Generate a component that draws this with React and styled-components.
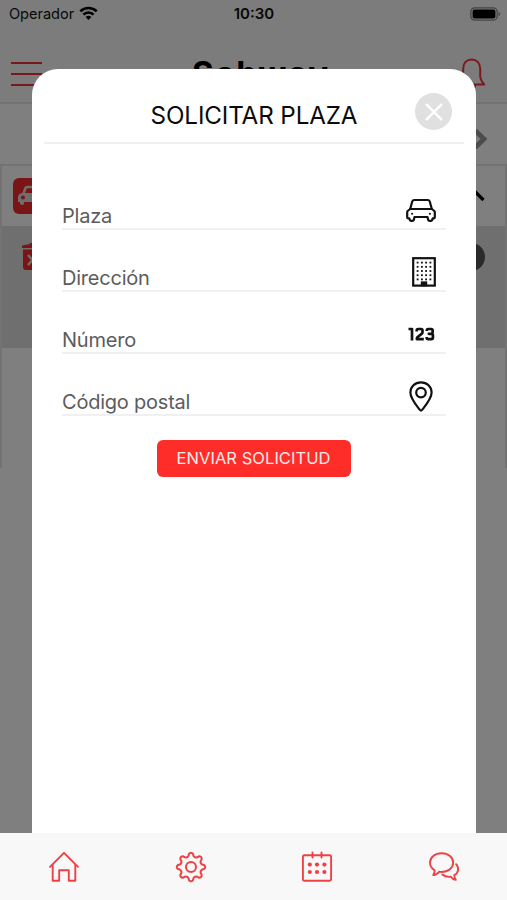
import React, { useState } from "react";
import styled, { createGlobalStyle } from "styled-components";

const GlobalStyle = createGlobalStyle`
  * {
    box-sizing: border-box;
  }
  body {
    margin: 0;
    font-family: Inter, "Liberation Sans", sans-serif;
    background: #fff;
  }
  svg {
    display: block;
    flex: none;
  }
`;

const Phone = styled.div`
  position: relative;
  display: flex;
  flex-direction: column;
  width: 507px;
  height: 900px;
  overflow: hidden;
  background: #fff;
`;

const StatusBar = styled.div`
  display: grid;
  grid-template-columns: 1fr auto 1fr;
  align-items: center;
  height: 27px;
  padding: 0 6px 0 9px;
  background: #f9f9f9;
  color: #111;
`;

const Carrier = styled.div`
  display: flex;
  align-items: center;
  gap: 5px;
  font-size: 14.6px;
  letter-spacing: -0.05px;
`;

const Clock = styled.div`
  margin-right: 2px;
  font-weight: 600;
  font-size: 15px;
`;

const BatterySlot = styled.div`
  justify-self: end;
`;

const Header = styled.header`
  display: flex;
  align-items: flex-start;
  justify-content: space-between;
  height: 77px;
  padding: 21px 21px 0 11px;
  background: #f9f9f9;
  border-bottom: 2px solid #e4e4e4;
`;

const Menu = styled.div`
  display: flex;
  flex-direction: column;
  gap: 9px;
  width: 31px;
  padding-top: 14px;
`;

const MenuLine = styled.span`
  height: 2px;
  background: #f5333a;
`;

const Brand = styled.h1`
  margin: 2px 0 0 22px;
  font-size: 33px;
  line-height: 46px;
  font-weight: 700;
  letter-spacing: 1.7px;
  color: #000;
`;

const Notifications = styled.div`
  padding-top: 10px;
`;

const SubBar = styled.div`
  display: flex;
  align-items: center;
  justify-content: flex-end;
  height: 60px;
  padding: 10px 20px 0 0;
`;

const Panel = styled.section`
  height: 304px;
  border: 2px solid #e6e6e6;
  border-bottom: 0;
`;

const PanelRow = styled.div`
  display: flex;
  align-items: center;
  justify-content: space-between;
  height: 60px;
  padding: 0 20px 0 11px;
`;

const PanelBody = styled.div`
  display: flex;
  align-items: flex-start;
  justify-content: space-between;
  height: 122px;
  padding: 17px 20px 0 19px;
  background: #dfdfdf;
`;

const CarBadge = styled.div`
  display: flex;
  align-items: center;
  justify-content: center;
  width: 36px;
  height: 36px;
  border-radius: 6px;
  background: #f52a2a;
`;

const Dot = styled.div`
  width: 28px;
  height: 28px;
  border-radius: 50%;
  background: #555;
`;

const Backdrop = styled.div`
  position: absolute;
  inset: 0;
  display: flex;
  padding: 69px 31px 67px 32px;
  background: rgba(0, 0, 0, 0.5);
`;

const Modal = styled.div`
  flex: 1;
  padding: 0 12px;
  border-radius: 26px 26px 0 0;
  background: #fff;
`;

const ModalHeader = styled.div`
  display: grid;
  grid-template-columns: 1fr auto 1fr;
  align-items: center;
  height: 75px;
  padding: 12px 12px 0 0;
  border-bottom: 2px solid #f0f0f0;
`;

const ModalTitle = styled.h2`
  grid-column: 2;
  margin: 7px 0 0 12px;
  font-size: 24.2px;
  font-weight: 400;
  letter-spacing: -0.12px;
  color: #0a0a0a;
`;

const CloseButton = styled.button`
  display: flex;
  align-items: center;
  justify-content: center;
  justify-self: end;
  width: 37px;
  height: 37px;
  padding: 0;
  border: 0;
  border-radius: 50%;
  background: #e0e0e0;
`;

const Form = styled.form`
  display: flex;
  flex-direction: column;
  padding: 24px 18px 0;
`;

const Field = styled.label`
  display: flex;
  align-items: flex-end;
  height: 62px;
  border-bottom: 2px solid #f0f0f0;
`;

const Input = styled.input`
  flex: 1;
  min-width: 0;
  height: 24px;
  padding: 0;
  border: 0;
  outline: 0;
  background: none;
  font-family: inherit;
  font-size: 20px;
  letter-spacing: -0.22px;
  color: #555;
  &::placeholder {
    color: #5c5c5c;
    opacity: 1;
  }
`;

const FieldIcon = styled.span`
  display: flex;
  align-items: center;
  justify-content: center;
  width: 32px;
  height: 32px;
  margin: 0 ${(props) => props.$right}px 2px 0;
`;

const Submit = styled.button`
  align-self: center;
  width: 194px;
  height: 37px;
  margin: 24px 1px 0 0;
  padding: 0 0 1px;
  border: 0;
  border-radius: 6px;
  background: #ff2d2a;
  color: #ffe9e7;
  font-family: inherit;
  font-size: 16.5px;
  letter-spacing: 0.05px;
`;

const TabBar = styled.nav`
  position: absolute;
  left: 0;
  right: 0;
  bottom: 0;
  display: grid;
  grid-template-columns: repeat(4, 1fr);
  justify-items: center;
  height: 67px;
  padding: 18px 0 0 1px;
  background: #f8f8f8;
`;

const WifiIcon = () => (
  <svg width="19" height="15" viewBox="0 0 19 15" fill="none" stroke="#000" strokeWidth="2.6">
    <path d="M1.3 5.4a11.6 11.6 0 0 1 16.4 0" />
    <path d="M4.4 8.6a7.2 7.2 0 0 1 10.2 0" />
    <path d="M9.5 14 6.6 11.1a4.1 4.1 0 0 1 5.8 0Z" fill="#000" stroke="none" />
  </svg>
);

const BatteryIcon = () => (
  <svg width="31" height="14" viewBox="0 0 31 14">
    <rect x="0.8" y="0.8" width="26.4" height="12.4" rx="4" fill="none" stroke="#888" strokeWidth="1.3" />
    <rect x="2.6" y="2.6" width="22.8" height="8.8" rx="2" fill="#000" />
    <path d="M28.7 4.8v4.4c2-.8 2-3.6 0-4.4Z" fill="#888" />
  </svg>
);

const BellIcon = () => (
  <svg width="28" height="34" viewBox="0 0 28 34" fill="none" stroke="#f5333a" strokeWidth="2" strokeLinejoin="round">
    <path d="M13.600 1.400C8.600 1.400 5.200 5 5.200 10.400v7c0 4-1.600 6.300-4 9h25c-2.400-2.700-4-5-4-9v-7C22.200 5 18.600 1.400 13.600 1.400Z" />
    <path d="M10.200 26.400c0 5 7 5 7 0" />
  </svg>
);

const CarIcon = () => (
  <svg width="32" height="26" viewBox="0 0 32 26" fill="none" stroke="#111" strokeWidth="2.2" strokeLinejoin="round" strokeLinecap="round">
    <path d="M5.200 12 7.300 4.300Q7.800 3 9.200 3h13.600q1.400 0 1.900 1.300L26.800 12" />
    <path d="M5.600 12h20.800" />
    <path d="M5.200 12 2.600 14Q2.200 14.500 2.200 15.400v4.800q0 1.200 1.200 1.200h.9l.5 1.500q.3 1 1.300 1H7.500q1 0 1.300-1l.7-2.900h13l.7 2.900q.3 1 1.300 1h1.400q1 0 1.300-1l.5-1.500h.9q1.200 0 1.200-1.200v-4.800q0-.9-.4-1.400L26.800 12" />
    <path d="M7 16.700h.2M24.800 16.700h.2" strokeWidth="1.900" />
  </svg>
);

const BuildingIcon = () => (
  <svg width="24" height="30" viewBox="0 0 24 30">
    <rect x="1.200" y="1.200" width="21.600" height="27.400" fill="none" stroke="#111" strokeWidth="2.200" />
    {[5.6, 9.8, 14, 18.2, 22.400].map((y) =>
      [5.6, 9.900, 14.100, 18.400].map((x) => (
        <rect key={`${x}-${y}`} x={x - 0.9} y={y - 0.9} width="1.800" height="1.800" fill="#111" />
      ))
    )}
    <rect x="8.800" y="24.400" width="6.400" height="5" fill="#111" />
  </svg>
);

const NumberIcon = () => (
  <svg width="27" height="14" viewBox="0 0 27 14" fill="none" stroke="#111" strokeWidth="2.700" strokeLinejoin="round">
    <path d="M0.500 2H4v11.500" />
    <path d="M8.700 4.600V3.400Q8.700 2 10.100 2h3Q14.500 2 14.500 3.400v1.800q0 1-.9 1.700L9.600 10q-.8.700-.8 2.100h7" />
    <path d="M18.800 4V3.400Q18.800 2 20.200 2h3q1.400 0 1.400 1.400v1.900q0 1.500-1.400 1.500h-2.400 2.600q1.500 0 1.500 1.500v2.300q0 1.500-1.500 1.500h-3.300q-1.400 0-1.400-1.400V10" />
  </svg>
);

const PinIcon = () => (
  <svg width="24" height="31" viewBox="0 0 24 31" fill="none" stroke="#111" strokeWidth="2.200" strokeLinejoin="round">
    <path d="M12 1.400c-6 0-10.600 4.300-10.600 10.100C1.400 17.600 7 23.800 10.900 28.900q1.100 1.300 2.200 0C17 23.800 22.600 17.600 22.600 11.500 22.600 5.700 18 1.400 12 1.400Z" />
    <circle cx="12" cy="11.600" r="4.800" />
  </svg>
);

const CloseIcon = () => (
  <svg width="18" height="18" viewBox="0 0 18 18" stroke="#fff" strokeWidth="2.400" strokeLinecap="round">
    <path d="M1.700 1.700l14.600 14.600M16.300 1.700 1.700 16.300" />
  </svg>
);

const HomeIcon = () => (
  <svg width="32" height="32" viewBox="0 0 32 32" fill="none" stroke="#ee4145" strokeWidth="1.900" strokeLinejoin="round" strokeLinecap="round">
    <path d="M2 15.800 16 1.800l14 14" />
    <path d="M4.700 14v15.700h6.500V19.200h9.600v10.500h6.500V14" />
  </svg>
);

// el contorno del engranaje se calcula alternando diente y valle
const gearPath = () => {
  const point = (radius, deg) => {
    const a = (deg * Math.PI) / 180;
    return `${(16 + radius * Math.sin(a)).toFixed(2)} ${(16 - radius * Math.cos(a)).toFixed(2)}`;
  };
  let d = `M${point(13.2, -9)}`;
  for (let i = 0; i < 8; i++) {
    const t = i * 45;
    d += `Q${point(15.4, t)} ${point(13.2, t + 9)}`;
    d += `L${point(11.4, t + 13)}Q${point(9.8, t + 22.5)} ${point(11.4, t + 32)}`;
    d += `L${point(13.2, t + 36)}`;
  }
  return d + "Z";
};

const GearIcon = () => (
  <svg width="32" height="32" viewBox="0 0 32 32" fill="none" stroke="#ee4145" strokeWidth="2" strokeLinejoin="round">
    <path d={gearPath()} />
    <circle cx="16" cy="16" r="5" />
  </svg>
);

const CalendarIcon = () => (
  <svg width="32" height="32" viewBox="0 0 32 32" fill="none" stroke="#ee4145" strokeWidth="1.900" strokeLinecap="round">
    <rect x="1.900" y="4.200" width="28.200" height="25.600" rx="1.500" />
    <path d="M11.500 1.500v5M20.500 1.500v5" />
    {[13.600, 21].map((y) =>
      [8.800, 16, 23.400].map((x) => <circle key={`${x}-${y}`} cx={x} cy={y} r="2.1" fill="#ee4145" stroke="none" />)
    )}
  </svg>
);

const ChatIcon = () => (
  <svg width="32" height="32" viewBox="0 0 32 32" fill="none" stroke="#ee4145" strokeWidth="1.900" strokeLinejoin="round" strokeLinecap="round">
    <path d="M13.600 2.200C6.900 2.200 2 6.300 2 11.600c0 3.300 1.700 6 4.700 7.700q.2 2.800-1.500 4.800 4-.5 5.800-3.400 1.200.3 2.600.3c6.700 0 11.600-4.100 11.600-9.400S20.300 2.200 13.600 2.200Z" />
    <path d="M28.100 13.200c3.300 3.500 2.600 8.700-1.800 11q.1 2.700 1.500 4.700-3.300-.5-5-3.100c-3.200.3-6.600-.7-8.500-2.300" />
  </svg>
);

const BadgeCarIcon = () => (
  <svg width="28" height="22" viewBox="0 0 28 22">
    <path d="M6.500 8.500 8.500 3Q9 2 10.200 2h7.600Q19 2 19.500 3l2 5.500" fill="none" stroke="#ddd" strokeWidth="2.500" />
    <path d="M5 8h18q4 1 4 4v5h-2v2q-2 2-4 0v-2H7v2q-2 2-4 0v-2H1v-5q0-3 4-4Z" fill="#ddd" />
    <circle cx="6" cy="12.500" r="2" fill="#f52a2a" />
    <circle cx="22" cy="12.500" r="2" fill="#f52a2a" />
  </svg>
);

const TrashIcon = () => (
  <svg width="26" height="29" viewBox="0 0 26 29">
    <path d="M1 2.500 9 1V0h8v1l8 1.500V5H1Z" fill="#f52a2a" />
    <path d="M2 6.500h22V24q0 3-3 3H5q-3 0-3-3Z" fill="#f52a2a" />
    <path d="m7 12 9 10m0-10L7 22" stroke="#ddd" strokeWidth="2.500" />
  </svg>
);

const ArrowIcon = () => (
  <svg width="16" height="20" viewBox="0 0 16 20" fill="none" stroke="#999" strokeWidth="5">
    <path d="m4 1.500 9 8.500-9 8.500" />
  </svg>
);

const ChevronUpIcon = () => (
  <svg width="22" height="14" viewBox="0 0 22 14" fill="none" stroke="#000" strokeWidth="3.200">
    <path d="m1.500 11 9.500-9.500L20.500 11" />
  </svg>
);

const fields = [
  { name: "plaza", label: "Plaza", icon: <CarIcon />, right: 9 },
  { name: "direccion", label: "Dirección", icon: <BuildingIcon />, right: 6 },
  { name: "numero", label: "Número", icon: <NumberIcon />, right: 9 },
  { name: "codigoPostal", label: "Código postal", icon: <PinIcon />, right: 9 },
];

function App() {
  const [values, setValues] = useState({});
  const onChange = (event) => setValues({ ...values, [event.target.name]: event.target.value });
  const onSubmit = (event) => event.preventDefault();

  return (
    <Phone>
      <GlobalStyle />
      <StatusBar>
        <Carrier>
          Operador <WifiIcon />
        </Carrier>
        <Clock>10:30</Clock>
        <BatterySlot>
          <BatteryIcon />
        </BatterySlot>
      </StatusBar>
      <Header>
        <Menu>
          <MenuLine />
          <MenuLine />
          <MenuLine />
        </Menu>
        <Brand>Sabway</Brand>
        <Notifications>
          <BellIcon />
        </Notifications>
      </Header>
      <SubBar>
        <ArrowIcon />
      </SubBar>
      <Panel>
        <PanelRow>
          <CarBadge>
            <BadgeCarIcon />
          </CarBadge>
          <ChevronUpIcon />
        </PanelRow>
        <PanelBody>
          <TrashIcon />
          <Dot />
        </PanelBody>
      </Panel>

      <Backdrop>
        <Modal>
          <ModalHeader>
            <ModalTitle>SOLICITAR PLAZA</ModalTitle>
            <CloseButton aria-label="Cerrar">
              <CloseIcon />
            </CloseButton>
          </ModalHeader>
          <Form onSubmit={onSubmit}>
            {fields.map((field) => (
              <Field key={field.name}>
                <Input
                  name={field.name}
                  placeholder={field.label}
                  value={values[field.name] || ""}
                  onChange={onChange}
                />
                <FieldIcon $right={field.right}>{field.icon}</FieldIcon>
              </Field>
            ))}
            <Submit>ENVIAR SOLICITUD</Submit>
          </Form>
        </Modal>
      </Backdrop>

      <TabBar>
        <HomeIcon />
        <GearIcon />
        <CalendarIcon />
        <ChatIcon />
      </TabBar>
    </Phone>
  );
}

export default App;
